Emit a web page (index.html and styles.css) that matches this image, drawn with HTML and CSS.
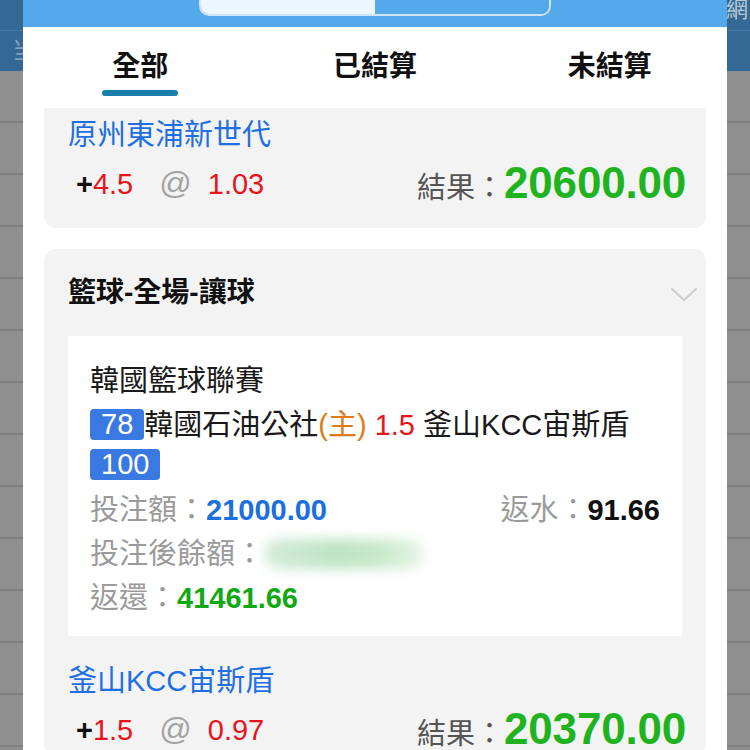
FILE: index.html
```html
<!DOCTYPE html>
<html lang="zh-Hant">
<head>
<meta charset="utf-8">
<title>注單</title>
<link rel="stylesheet" href="styles.css">
</head>
<body>
<div class="page">
  <div class="bg-head">
    <div class="bg-head-top"><span class="bg-txt-r">網</span></div>
    <div class="bg-head-bot"><span class="bg-txt-l">当</span></div>
  </div>
  <div class="bg-rows">
    <div class="bg-row"></div><div class="bg-row"></div><div class="bg-row"></div>
    <div class="bg-row"></div><div class="bg-row"></div><div class="bg-row"></div>
    <div class="bg-row"></div><div class="bg-row"></div><div class="bg-row"></div>
    <div class="bg-row"></div><div class="bg-row"></div><div class="bg-row"></div>
    <div class="bg-row"></div>
  </div>

  <div class="modal">
    <div class="modal-head">
      <div class="seg">
        <div class="seg-on"></div>
        <div class="seg-off"></div>
      </div>
    </div>
    <div class="tabs">
      <div class="tab active"><span class="tab-label">全部</span><span class="tab-bar"></span></div>
      <div class="tab"><span class="tab-label">已結算</span></div>
      <div class="tab"><span class="tab-label">未結算</span></div>
    </div>

    <div class="list">
      <div class="card card-cut">
        <div class="team">原州東浦新世代</div>
        <div class="result-row">
          <div class="odds"><b class="plus">+</b><span class="red">4.5</span><span class="at">@</span><span class="red">1.03</span></div>
          <div class="result"><span class="result-label">結果：</span><span class="result-num">20600.00</span></div>
        </div>
      </div>

      <div class="card">
        <div class="card-head">
          <span class="card-title">籃球-全場-讓球</span>
          <svg class="chev" width="28" height="16" viewBox="0 0 28 16"><path d="M2 2 L14 13 L26 2" fill="none" stroke="#cdcdcd" stroke-width="2.2" stroke-linecap="round" stroke-linejoin="round"/></svg>
        </div>
        <div class="detail">
          <div class="d-line">韓國籃球聯賽</div>
          <div class="d-match"><span class="badge">78</span>韓國石油公社<span class="home">(主)</span> <span class="red">1.5</span> 釜山KCC宙斯盾<span class="badge">100</span></div>
          <div class="d-line d-split">
            <span><span class="lbl">投注額：</span><b class="num-blue">21000.00</b></span>
            <span><span class="lbl">返水：</span><b class="num-black">91.66</b></span>
          </div>
          <div class="d-line"><span class="lbl">投注後餘額：</span><span class="blur"></span></div>
          <div class="d-line"><span class="lbl">返還：</span><b class="num-green">41461.66</b></div>
        </div>
        <div class="team team-2">釜山KCC宙斯盾</div>
        <div class="result-row">
          <div class="odds"><b class="plus">+</b><span class="red">1.5</span><span class="at">@</span><span class="red">0.97</span></div>
          <div class="result"><span class="result-label">結果：</span><span class="result-num">20370.00</span></div>
        </div>
      </div>
    </div>
  </div>
</div>
</body>
</html>
```

FILE: styles.css
```css
* { box-sizing: border-box; }
html, body { margin: 0; padding: 0; }
body {
  width: 750px;
  height: 750px;
  overflow: hidden;
  font-family: "Liberation Sans", "Noto Sans CJK TC", sans-serif;
  background: #8f8f8f;
}
.page { position: relative; width: 750px; height: 750px; overflow: hidden; }

.bg-head { height: 71px; background: #346995; }
.bg-head-top { height: 31px; border-bottom: 1px solid #4a7ba3; position: relative; }
.bg-head-bot { height: 39px; position: relative; }
.bg-txt-r { position: absolute; left: 726px; top: -2px; font-size: 22px; color: #b9c9d8; line-height: 24px; }
.bg-txt-l { position: absolute; left: 12px; top: 6px; font-size: 24px; color: #7f9fbd; line-height: 28px; }
.bg-row { height: 52px; border-bottom: 2px solid #7f7f7f; }

.modal {
  position: absolute;
  left: 23px;
  top: 0;
  width: 704px;
  height: 750px;
  background: #fff;
  overflow: hidden;
}
.modal-head { height: 27px; background: #54a9eb; }
.seg {
  margin-left: 176px;
  width: 352px;
  height: 16px;
  display: flex;
  border: 2px solid #cfe5f8;
  border-top: none;
  border-radius: 0 0 10px 10px;
  overflow: hidden;
}
.seg-on { flex: 1; background: #eef6fd; }
.seg-off { flex: 1; background: #54a9eb; }

.tabs {
  height: 81px;
  display: grid;
  grid-template-columns: 1fr 1fr 1fr;
}
.tab {
  display: flex;
  flex-direction: column;
  align-items: center;
  padding-top: 20px;
}
.tab-label {
  font-size: 28px;
  font-weight: bold;
  line-height: 40px;
  color: #111;
}
.tab-bar {
  margin-top: 3px;
  width: 76px;
  height: 6px;
  border-radius: 3px;
  background: #1b7dac;
}

.list { padding: 0 21px; }
.card {
  background: #f3f3f3;
  border-radius: 12px;
  padding: 0 20px 0 24px;
  margin-bottom: 21px;
}
.card-cut {
  border-radius: 0 0 12px 12px;
  padding-top: 5px;
  padding-bottom: 19px;
}
.team {
  font-size: 29px;
  line-height: 44px;
  color: #1f6fe3;
}
.team-2 { margin-top: 23px; }
.result-row {
  height: 52px;
  display: flex;
  align-items: center;
  justify-content: space-between;
}
.odds {
  font-size: 29px;
  line-height: 40px;
  padding-left: 8px;
}
.plus { color: #111; }
.red { color: #e8131b; }
.at {
  color: #a3a3a3;
  margin: 0 16px 0 26px;
  font-size: 32px;
}
.result { display: flex; align-items: baseline; }
.result-label { font-size: 29px; color: #555; }
.result-num {
  font-size: 44px;
  font-weight: bold;
  color: #1fb41f;
  letter-spacing: -0.2px;
}

.card-head {
  padding-top: 22px;
  height: 65px;
  display: flex;
  justify-content: space-between;
  align-items: flex-start;
}
.card-title {
  font-size: 28px;
  font-weight: bold;
  line-height: 44px;
  color: #111;
}
.chev { margin-top: 16px; margin-right: -12px; }

.detail {
  margin: 22px 4px 0 0;
  background: #fff;
  padding: 23px 22px 16px 22px;
}
.d-line {
  font-size: 29px;
  line-height: 44px;
  color: #1a1a1a;
  display: flex;
  align-items: center;
}
.d-split { justify-content: space-between; }
.d-match {
  font-size: 29px;
  line-height: 40px;
  color: #1a1a1a;
  padding-top: 2px;
  padding-bottom: 3px;
}
.badge {
  display: inline-block;
  background: #3b79e2;
  color: #fff;
  border-radius: 4px;
  padding: 0 11px;
  line-height: 31px;
  vertical-align: 1px;
}
.home { color: #e07a16; }
.lbl { color: #9a9a9a; }
.num-blue { color: #1b6fe0; }
.num-black { color: #111; }
.num-green { color: #12a812; }
.blur {
  display: inline-block;
  width: 160px;
  height: 30px;
  border-radius: 15px;
  background: linear-gradient(90deg, #d5ecdc 0%, #bde3c2 45%, #c7e8c8 70%, #e6f5e6 100%);
  filter: blur(6px);
}
```
